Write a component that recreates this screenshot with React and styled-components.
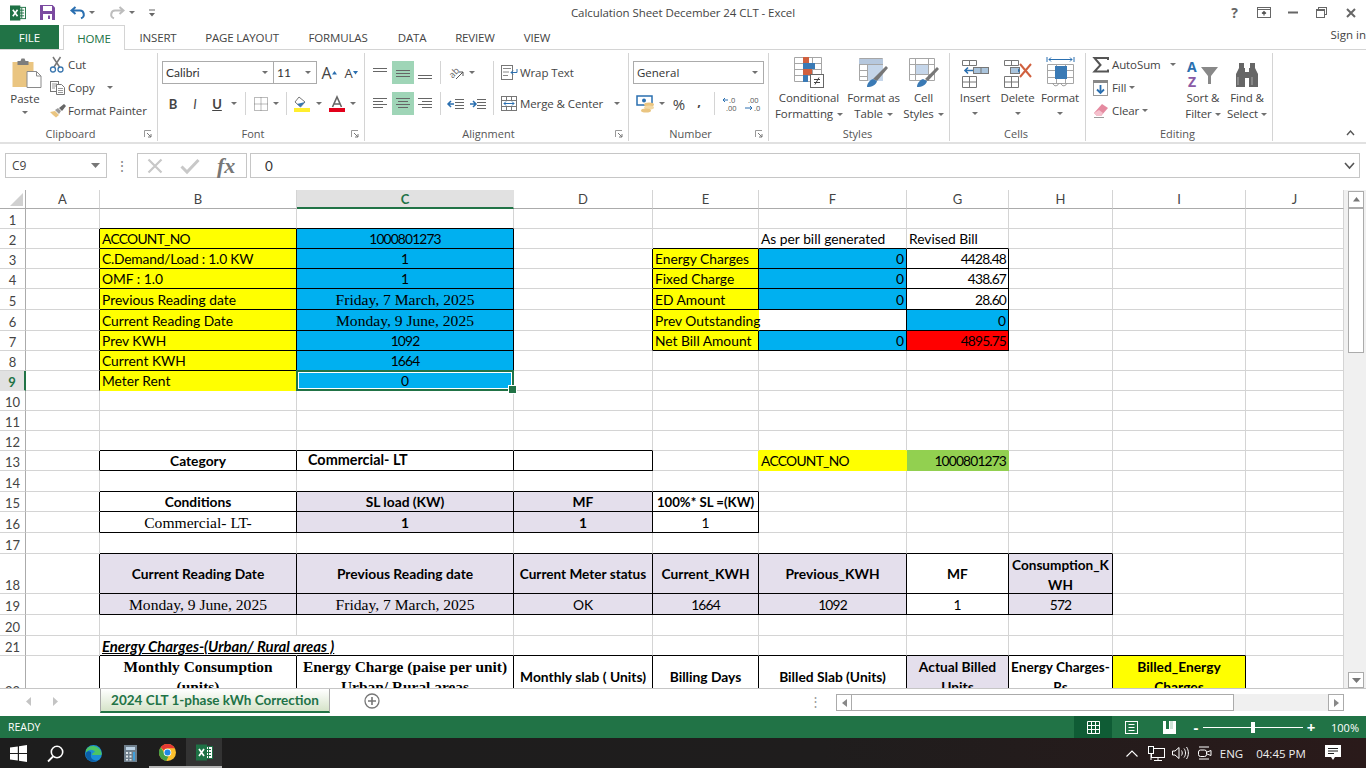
import React from 'react';
import styled, { createGlobalStyle } from 'styled-components';

const UI = '"Open Sans","Liberation Sans",sans-serif';
const CAL = 'Lato,"Liberation Sans",sans-serif';
const SER = '"Liberation Serif",serif';
const GREEN = '#217346';
const GRID = '#d4d4d4';

const Global = createGlobalStyle`
  html, body { margin: 0; padding: 0; overflow: hidden; background: #fff; }
  #root { width: 1366px; height: 768px; }
  * { box-sizing: border-box; }
`;
const App_ = styled.div`
  width: 1366px; height: 768px; display: flex; flex-direction: column;
  font-family: ${UI}; font-size: 11.5px; color: #444; background: #fff; overflow: hidden;
`;
const Ico = styled.svg`display: block; flex: none; overflow: visible;`;

/* title bar */
const TitleBar = styled.header`display: grid; grid-template-columns: 1fr auto 1fr; height: 25px; align-items: center;`;
const Row = styled.div`display: flex; align-items: center; justify-content: ${p => p.$end ? 'flex-end' : 'flex-start'};`;
const Title = styled.div`font-size: 11.5px; color: #444; letter-spacing: -0.07px;`;
const Slot = styled.span`
  display: flex; flex: none; align-items: center; justify-content: center;
  width: ${p => p.$w}px; height: 23px; padding-bottom: ${p => p.$pb || 0}px; background: ${p => p.$on ? '#9fd5b7' : 'transparent'};
  font-family: ${p => p.$cal ? CAL : UI};
  font-size: ${p => p.$fs || 12}px; font-weight: ${p => p.$b ? 700 : 400}; font-style: ${p => p.$i ? 'italic' : 'normal'};
  text-decoration: ${p => p.$u ? 'underline' : 'none'}; color: #444;
`;
const Caret = styled.i`
  display: inline-block; flex: none; width: 0; height: 0; border-left: 3px solid transparent; border-right: 3px solid transparent;
  border-top: 3px solid #707070; vertical-align: middle; margin-left: ${p => p.$ml ?? 0}px; margin-right: ${p => p.$mr ?? 0}px;
  margin-top: ${p => p.$mt ?? 0}px;
`;

/* tabs */
const TabBar = styled.nav`display: flex; height: 25px; align-items: stretch; border-bottom: 1px solid ${GRID};`;
const FileTab = styled.div`width: 59px; margin-right: 4px; background: ${GREEN}; color: #fff; display: flex; align-items: center; justify-content: center; font-size: 11.5px;`;
const Tab = styled.div`
  width: ${p => p.$w}px; display: flex; align-items: center; justify-content: center; font-size: 11.5px; letter-spacing: -0.15px;
  color: ${p => p.$on ? GREEN : '#444'}; background: #fff; height: ${p => p.$on ? 25 : 24}px;
  ${p => p.$on ? `border: 1px solid ${GRID}; border-bottom: 0;` : ''}
`;
const SignIn = styled.div`margin-left: auto; display: flex; align-items: center; font-size: 11.5px; color: #444; white-space: nowrap; padding-bottom: 5px;`;

/* ribbon */
const Ribbon = styled.section`display: flex; height: 94px; padding-top: 3px; border-bottom: 2px solid #e1e1e1;`;
const Group = styled.div`
  width: ${p => p.$w}px; flex: none; display: flex; flex-direction: column; height: 88px; border-right: 1px solid ${GRID};
`;
const GroupBody = styled.div`flex: 1; display: flex; padding-left: ${p => p.$pl || 0}px; min-height: 0;`;
const CollapseBox = styled.div`flex: 1; display: flex; justify-content: flex-end; align-items: flex-end; padding: 0 11px 6px 0;`;
const GroupFoot = styled.div`height: 14px; flex: none; display: flex; align-items: center; padding-right: 3px;`;
const GroupLabel = styled.div`flex: 1; text-align: center; font-size: 11px; color: #555; line-height: 14px;`;
const Launcher = styled.span`width: 13px; display: flex; justify-content: center;`;
const Stack = styled.div`display: flex; flex-direction: column; flex: none; width: ${p => p.$w ? p.$w + 'px' : 'auto'}; padding-top: ${p => p.$pt || 0}px; gap: ${p => p.$gap || 0}px;`;
const ToolRow = styled.div`display: flex; align-items: center; height: 23px; white-space: nowrap;`;
const ToolText = styled.span`font-size: 11.5px; color: #444; letter-spacing: -0.1px; margin-left: ${p => p.$ml ?? 4}px;`;
const Sep = styled.span`flex: none; width: 1px; height: 23px; background: ${GRID}; margin: 0 ${p => p.$m ?? 3}px;`;
const VSep = styled.span`flex: none; width: 1px; height: 54px; background: ${GRID}; margin: 8px ${p => p.$r ?? 7}px 0 ${p => p.$l ?? 3}px;`;
const PasteBtn = styled.div`width: 50px; flex: none; display: flex; flex-direction: column; align-items: center; padding-top: 5px; font-size: 11.5px; line-height: 16px;`;
const PasteLabel = styled.span`margin-top: 3px;`;
const Combo = styled.div`
  width: ${p => p.$w}px; height: 23px; flex: none; display: flex; align-items: center; justify-content: space-between;
  border: 1px solid #ababab; padding: 0 5px 0 3px; font-family: ${p => p.$ui ? UI : CAL}; font-size: ${p => p.$ui ? 11.5 : 12}px; color: #333;
  ${p => p.$joined ? 'margin-left: -1px;' : ''}
`;
const BigBtn = styled.div`
  width: ${p => p.$w}px; flex: none; display: flex; flex-direction: column; align-items: center; text-align: center;
  font-size: 11.5px; line-height: 16px; color: #444; letter-spacing: -0.1px; white-space: nowrap;
`;
const BigIcon = styled.div`height: 37px; display: flex; align-items: flex-end; padding-bottom: 2px;`;

/* formula */
const FormulaBar = styled.div`display: flex; align-items: stretch; height: 46px; padding: 9px 6px 12px 5px; flex: none;`;
const NameBox = styled.div`width: 102px; border: 1px solid #c6c6c6; display: flex; align-items: center; justify-content: space-between; padding: 0 6px; font-size: 12px; color: #444;`;
const Grip = styled.div`width: 30px; display: flex; align-items: center; justify-content: center; color: #888; font-size: 14px;`;
const FxBox = styled.div`width: 110px; border: 1px solid #c6c6c6; display: flex; align-items: center; padding-left: 9px; gap: 17px;`;
const FxGlyph = styled.span`font-family: ${SER}; font-style: italic; font-weight: 700; font-size: 22px; color: #777; line-height: 22px;`;
const FormulaInput = styled.div`flex: 1; margin-left: 3px; border: 1px solid #c6c6c6; display: flex; align-items: center; justify-content: space-between; padding: 0 4px 0 14px; font-family: ${CAL}; font-size: 13.5px; color: #333;`;

/* sheet */
const Sheet = styled.div`height: 498px; flex: none; display: flex; overflow: hidden;`;
const Table = styled.div`
  width: 1344px; height: 498px; overflow: hidden; display: grid; flex: none; align-content: start;
  grid-template-columns: 26px 74px 197px 217px 139px 106px 148px 102px 104px 133px 98px;
  grid-template-rows: 19px 20px 20px 20px 20px 21px 21px 20px 20px 20px 20px 20px 20px 20px 21px 20px 21px 21px 40px 21px 21px 20px 44px;
`;
const Corner = styled.div`background: #fff; border-right: 1px solid #ababab; border-bottom: 1px solid #ababab; display: flex; align-items: flex-end; justify-content: flex-end; padding: 0 2px 2px 0;`;
const ColHead = styled.div`
  display: flex; align-items: center; justify-content: center; font-family: ${CAL}; font-size: 13px;
  background: ${p => p.$on ? '#e1e1e1' : '#fff'}; color: ${p => p.$on ? GREEN : '#444'}; font-weight: ${p => p.$on ? 700 : 400};
  border-right: 1px solid ${p => p.$on ? '#e1e1e1' : GRID}; border-bottom: ${p => p.$on ? `2px solid ${GREEN}` : '1px solid #ababab'};
`;
const RowHead = styled.div`
  display: flex; align-items: flex-end; justify-content: center; font-family: ${CAL}; font-size: 13px;
  background: ${p => p.$on ? '#e1e1e1' : '#fff'}; color: ${p => p.$on ? GREEN : '#444'}; font-weight: ${p => p.$on ? 700 : 400};
  border-right: ${p => p.$on ? `2px solid ${GREEN}` : '1px solid #ababab'}; border-bottom: 1px solid ${p => p.$on ? '#e1e1e1' : GRID};
`;
const Cell = styled.div`
  position: relative; display: flex; min-width: 0; padding: ${p => p.$top && p.$wrap ? '1px' : '0'} 2px ${p => p.$pb || 0}px ${p => p.$pl ?? 2}px;
  line-height: ${p => p.$wrap ? '20px' : '18px'};
  background: ${p => p.$fill || 'transparent'}; color: #000;
  font-family: ${p => p.$serif ? SER : CAL}; font-size: ${p => p.$fs ? p.$fs : p.$serif ? 15.6 : 13.8}px;
  letter-spacing: ${p => p.$ls ?? 0}px;
  font-weight: ${p => p.$bold ? 700 : 400}; font-style: ${p => p.$ital ? 'italic' : 'normal'};
  text-decoration: ${p => p.$und ? 'underline' : 'none'};
  justify-content: ${p => p.$al === 'c' ? 'center' : p.$al === 'r' ? 'flex-end' : 'flex-start'};
  align-items: ${p => p.$top ? 'flex-start' : p.$mid ? 'center' : 'flex-end'};
  text-align: ${p => p.$al === 'c' ? 'center' : p.$al === 'r' ? 'right' : 'left'};
  white-space: ${p => p.$wrap ? 'pre-line' : 'nowrap'}; word-break: ${p => p.$brk ? 'break-all' : 'normal'};
  border-right: 1px solid ${p => p.$rc}; border-bottom: 1px solid ${p => p.$bc};
  ${p => p.$sel ? `
    &::before { content: ''; position: absolute; inset: -1px; border: 2px solid ${GREEN}; box-shadow: inset 0 0 0 1px #fff; z-index: 1; }
    &::after { content: ''; position: absolute; right: -4px; bottom: -4px; width: 7px; height: 7px; background: ${GREEN}; border: 1px solid #fff; z-index: 2; }` : ''}
`;
const VScroll = styled.div`flex: 1; display: flex; flex-direction: column; align-items: center; padding: 1px 2px 0 4px; background: #f0f0f0;`;
const ScrollBtn = styled.div`width: 16px; height: ${p => p.$h || 17}px; flex: none; background: #fff; border: 1px solid #ababab; display: flex; align-items: center; justify-content: center;`;
const VThumb = styled.div`width: 16px; height: 145px; flex: none; background: #fff; border: 1px solid #ababab;`;
const VFill = styled.div`flex: 1;`;

/* sheet tabs */
const SheetBar = styled.div`height: 28px; flex: none; display: flex; align-items: flex-start; border-top: 1px solid #c6c6c6; background: #fff;`;
const TabNav = styled.div`width: 100px; flex: none; height: 24px; display: flex; align-items: center; padding-left: 26px; gap: 22px;`;
const ActiveSheet = styled.div`
  width: 230px; height: 24px; flex: none; display: flex; align-items: center; justify-content: center;
  background: linear-gradient(#ffffff, #d5e3c8); border: 1px solid #ababab; border-top: 0; border-bottom: 2px solid ${GREEN};
  color: ${GREEN}; font-family: ${CAL}; font-weight: 700; font-size: 13.5px; white-space: nowrap;
`;
const AddSheet = styled.div`margin-left: 34px; height: 24px; display: flex; align-items: center;`;
const Dots = styled.div`margin-left: auto; height: 24px; display: flex; align-items: center; color: #999; font-size: 13px; padding-right: 14px;`;
const HScroll = styled.div`width: 508px; height: 17px; margin: 5px 22px 0 0; flex: none; display: flex; background: #f0f0f0;`;
const HThumb = styled.div`width: 382px; background: #fff; border: 1px solid #ababab; border-left: 0;`;
const HFill = styled.div`flex: 1;`;

/* status */
const Status = styled.footer`height: 22px; flex: none; background: ${GREEN}; display: flex; align-items: center; color: #fff; font-size: 10.5px; padding-left: 8px;`;
const StatusRight = styled.div`margin-left: auto; display: flex; align-items: center; height: 22px;`;
const ViewBtn = styled.div`width: ${p => p.$w}px; height: 22px; display: flex; align-items: center; justify-content: center; background: ${p => p.$on ? '#0f5c35' : 'transparent'};`;
const Slider = styled.div`width: 100px; height: 1px; background: #fff; margin-right: 1px; display: flex; align-items: center; justify-content: center;`;
const SliderThumb = styled.div`width: 4px; height: 11px; flex: none; background: #fff;`;
const ZoomSign = styled.span`font-size: 15px; font-weight: 700; width: 14px; text-align: center; line-height: 20px;`;
const ZoomPct = styled.span`width: 42px; margin-left: 6px; text-align: center; font-size: 11px;`;

/* taskbar */
const Taskbar = styled.div`height: 30px; flex: none; background: linear-gradient(90deg, #1d1d1d 0%, #1f1d1d 60%, #2a1a1a 100%); display: flex; align-items: center; color: #f0f0f0;`;
const TaskBtn = styled.div`
  width: ${p => p.$w || 37}px; height: 30px; flex: none; display: flex; align-items: center; justify-content: center;
  background: ${p => p.$on ? '#333' : 'transparent'}; border-bottom: ${p => p.$line ? '2px solid #b5b5b5' : '0'};
`;
const Tray = styled.div`margin-left: auto; display: flex; align-items: center; height: 30px; font-size: 11.5px; padding-right: 15px;`;
const TrayText = styled.span`width: ${p => p.$w}px; text-align: center; color: #eee; white-space: nowrap;`;
const HelpGlyph = styled.span`font-weight: 700; font-size: 14px; color: #666;`;

/* ---- icons ---- */
const Svg = ({ w, h, children }) => <Ico width={w} height={h} viewBox={`0 0 ${w} ${h}`} fill="none">{children}</Ico>;

const XlLogo = ({ s = 17 }) => (
  <Ico width={s} height={s} viewBox="0 0 17 17" fill="none">
    <rect x="8" y="2.5" width="8.5" height="12" fill="#fff" stroke="#1e7145" />
    <path d="M10 5.5h5M10 8.5h5M10 11.5h5M12.5 3v11" stroke="#1e7145" />
    <rect x="0" y="0.5" width="11" height="16" fill="#1e7145" />
    <path d="M3 5l5 7M8 5l-5 7" stroke="#fff" strokeWidth="1.7" />
  </Ico>
);
const SaveI = () => <Svg w={15} h={15}><path d="M0 0h12.5L15 2.5V15H0z" fill="#7b4aa0" /><rect x="3" y="1" width="9" height="5" fill="#fff" /><rect x="3" y="9" width="9" height="6" fill="#fff" /><rect x="8" y="10.5" width="2" height="3.5" fill="#7b4aa0" /></Svg>;
const UndoI = ({ c = '#2a6fb0' }) => <Svg w={15} h={13}><path d="M5.5 1L1.5 4.5l4 3.5M2 4.5h7.5a4 4 0 0 1 1.5 7.8" stroke={c} strokeWidth="2" /></Svg>;
const RedoI = () => <Svg w={15} h={13}><path d="M9.5 1l4 3.5-4 3.5M13 4.5H5.5A4 4 0 0 0 4 12.3" stroke="#bdbdbd" strokeWidth="2" /></Svg>;
const QatI = () => <Svg w={8} h={8}><path d="M1 1h6" stroke="#666" /><path d="M1 4h6L4 7.5z" fill="#666" /></Svg>;
const RibDispI = () => <Svg w={14} h={11}><rect x=".5" y=".5" width="13" height="10" stroke="#666" /><path d="M1 2.5h12" stroke="#666" /><path d="M7 8.5V4.5M5 6.5l2-2 2 2" stroke="#555" strokeWidth="1.2" /></Svg>;
const MinI = () => <Svg w={10} h={3}><rect y="0.5" width="10" height="2" fill="#666" /></Svg>;
const RestI = () => <Svg w={11} h={11}><rect x="2.5" y=".5" width="8" height="7" stroke="#666" /><rect x=".5" y="2.5" width="8" height="8" fill="#fff" stroke="#666" /><path d="M1 3.5h7" stroke="#666" /></Svg>;
const CloseI = () => <Svg w={10} h={10}><path d="M1 1l8 8M9 1l-8 8" stroke="#666" strokeWidth="2" /></Svg>;

const PasteI = () => (
  <Svg w={30} h={30}>
    <g transform="translate(2.5 0)">
      <rect x="0" y="4" width="21" height="25" fill="#eac581" />
      <path d="M5 3h3l1-2.5h3l1 2.5h3v4H5z" fill="#7d7d7d" />
      <path d="M14.5 13.5H24l4.5 4.5v11.5h-14z" fill="#fff" stroke="#8a8a8a" />
      <path d="M24 13.5V18h4.5" stroke="#8a8a8a" />
    </g>
  </Svg>
);
const CutI = () => <Svg w={14} h={16}><path d="M3 0l6.5 10M10.5 0L4 10" stroke="#777" strokeWidth="1.5" /><circle cx="3" cy="12.5" r="2.5" stroke="#3a76ae" strokeWidth="1.3" /><circle cx="10.5" cy="12.5" r="2.5" stroke="#3a76ae" strokeWidth="1.3" /></Svg>;
const CopyI = () => <Svg w={16} h={14}><rect x=".5" y=".5" width="8" height="10" fill="#fff" stroke="#777" /><path d="M2 3h5M2 5h4M2 7h3" stroke="#999" /><path d="M6.5 3.5h5l3 3v7h-8z" fill="#fff" stroke="#777" /><path d="M8 7.5h5M8 9.5h5M8 11.5h5" stroke="#999" /></Svg>;
const PainterI = () => <Svg w={17} h={15}><path d="M0 9l5-1 4 4-3 2.5C4 13 2 11 0 9z" fill="#eac581" /><path d="M5 7l3-2 3 3-2 3z" fill="#999" /><path d="M9 5l5-4 2 2-4 5z" fill="#666" /></Svg>;
const Launch = () => <Svg w={8} h={8}><path d="M.5 7V.5H7" stroke="#999" /><path d="M3 3l4 4M7 4v3H4" stroke="#777" /></Svg>;
const TinyUp = () => <Svg w={5} h={4}><path d="M0 3.5h5L2.5 0z" fill="#2a6fb0" /></Svg>;
const TinyDown = () => <Svg w={5} h={4}><path d="M0 0h5L2.5 3.5z" fill="#2a6fb0" /></Svg>;
const BordersI = () => <Svg w={14} h={14}><path d="M.5.5h13v13H.5zM7 .5v13M.5 7h13" stroke="#777" strokeDasharray="1 1" /></Svg>;
const FillI = () => <Svg w={16} h={16}><path d="M5 1l6 5-4.5 5L1 6z" fill="#fff" stroke="#777" /><path d="M3 8l8-2-4.5 5z" fill="#3a76ae" /><rect y="12" width="16" height="4" fill="#ffee2e" /></Svg>;
const FontColorI = () => <Svg w={16} h={16}><path d="M3.5 11L8 1l4.5 10M5 8h6" stroke="#666" strokeWidth="1.6" /><rect y="12" width="16" height="4" fill="#e2001a" /></Svg>;
const LinesI = ({ rows }) => <Svg w={15} h={14}>{rows.map(([a, b, y]) => <path key={y} d={`M${a} ${y}.5H${b}`} stroke="#666" />)}</Svg>;
const Orient = () => <Svg w={16} h={16}><text x="1" y="11" fontSize="9" fill="#666" fontFamily="Open Sans" transform="rotate(-45 6 8)">ab</text><path d="M8 14L15 7M15 11V7h-4" stroke="#555" /></Svg>;
const Outdent = () => <Svg w={16} h={11}><path d="M7 1.5h9M7 4.5h9M7 7.5h9M7 10.5h9" stroke="#666" /><path d="M0 6h6M3 3L0 6l3 3" stroke="#2a6fb0" strokeWidth="1.5" /></Svg>;
const Indent = () => <Svg w={16} h={11}><path d="M7 1.5h9M7 4.5h9M7 7.5h9M7 10.5h9" stroke="#666" /><path d="M0 6h6M3 3l3 3-3 3" stroke="#2a6fb0" strokeWidth="1.5" /></Svg>;
const WrapI = () => <Svg w={17} h={15}><rect x=".5" y=".5" width="11" height="14" fill="#fff" stroke="#777" /><path d="M2 3.5h8M2 7h6M2 10.5h5" stroke="#888" /><path d="M16 4v3.5H10M12 5.5l-2 2 2 2" stroke="#2a6fb0" /></Svg>;
const MergeI = () => <Svg w={16} h={15}><rect x=".5" y=".5" width="15" height="14" fill="#fff" stroke="#777" /><path d="M.5 4.5h15M.5 10.5h15M5.5.5v4M10.5.5v4M5.5 10.5v4M10.5 10.5v4" stroke="#777" /><path d="M3 7.5h10M5 5.5l-2 2 2 2M11 5.5l2 2-2 2" stroke="#2a6fb0" /></Svg>;
const MoneyI = () => <Svg w={20} h={18}><rect x="1" y="1" width="15" height="9" fill="#fff" stroke="#2a6fb0" strokeWidth="1.5" /><circle cx="8" cy="5.5" r="2" fill="#2a6fb0" /><ellipse cx="13" cy="9.5" rx="5" ry="2" fill="#eac581" /><ellipse cx="13" cy="12.5" rx="5" ry="2" fill="#f3d9a4" /><ellipse cx="10" cy="15.5" rx="5" ry="2" fill="#eac581" /></Svg>;
const IncDec = () => <Svg w={16} h={16}><text x="6" y="7" fontSize="7.5" fill="#555" fontFamily="Open Sans">.0</text><text x="3" y="15" fontSize="7.5" fill="#555" fontFamily="Open Sans">.00</text><path d="M5 4H0M2 2L0 4l2 2" stroke="#2a6fb0" /></Svg>;
const DecInc = () => <Svg w={16} h={16}><text x="3" y="7" fontSize="7.5" fill="#555" fontFamily="Open Sans">.00</text><text x="9" y="15" fontSize="7.5" fill="#555" fontFamily="Open Sans">.0</text><path d="M0 12h7M5 10l2 2-2 2" stroke="#2a6fb0" /></Svg>;
const CondI = () => <Svg w={30} h={31}><path d="M.5.5h27v24H.5zM9.5.5v24M18.5.5v24M.5 6.5h27M.5 12.5h27M.5 18.5h27" stroke="#a6a6a6" /><rect x="9" y="0" width="6" height="6" fill="#d0603e" /><rect x="9" y="6" width="12" height="6" fill="#3a7ab5" /><rect x="9" y="12" width="9" height="6" fill="#d0603e" /><rect x="9" y="18" width="5" height="7" fill="#3a7ab5" /><rect x="16.5" y="17.5" width="13" height="13" fill="#fff" stroke="#666" /><path d="M20 22.5h6M20 25.5h6M25 20.5l-4 7" stroke="#444" /></Svg>;
const TableI = () => <Svg w={30} h={30}><path d="M.5.5h23v22H.5zM8.5.5v22M16.5.5v22M.5 6.5h23M.5 12.5h23M.5 18.5h23" stroke="#a6a6a6" /><rect x="9" y="7" width="15" height="16" fill="#c5d6ea" /><rect x="0" y="1" width="24" height="5" fill="#b6c8de" /><path d="M14 21l13-13 2 2-11 13z" fill="#777" /><path d="M8 29c0-4 3-7 6-8l4 2c-1 4-5 6-10 6z" fill="#3a7ab5" /></Svg>;
const CellStyleI = () => <Svg w={30} h={30}><path d="M.5.5h25v22H.5zM6.5.5v22M19.5.5v22M.5 6.5h25M.5 16.5h25" stroke="#a6a6a6" /><rect x="7" y="7" width="12" height="9" fill="#c5d6ea" /><path d="M16 21l12-12 2 2-11 12z" fill="#777" /><path d="M8 29c0-4 3-7 6-8l4 2c-1 4-5 6-10 6z" fill="#3a7ab5" /></Svg>;
const InsertI = () => <Svg w={28} h={28}><path d="M1.5.5h14v5h-14zM8.5.5v5M1.5 16.5h14v11h-14zM8.5 16.5v11M1.5 22h14" stroke="#777" /><path d="M12 10.5H4M7 7.5l-3 3 3 3" stroke="#2a6fb0" strokeWidth="1.6" /><rect x="12.5" y="7.5" width="15" height="6" fill="#aac4dc" stroke="#777" /><path d="M20 7.5v6" stroke="#777" /></Svg>;
const DeleteI = () => <Svg w={30} h={28}><path d="M1.5.5h14v5h-14zM8.5.5v5M1.5 16.5h14v11h-14zM8.5 16.5v11M1.5 22h14" stroke="#777" /><rect x="7.5" y="7.5" width="9" height="6" fill="#aac4dc" stroke="#777" /><path d="M17 10.5l-2-2v4z" fill="#2a6fb0" /><path d="M17 4l11 13M28 4L17 17" stroke="#d0603e" strokeWidth="2" /></Svg>;
const FormatI = () => <Svg w={29} h={32}><path d="M1 1v5M28 1v5M3 3.5h23M3 3.5l2-2M3 3.5l2 2M26 3.5l-2-2M26 3.5l-2 2" stroke="#2a6fb0" /><path d="M1.5 8.5h26v19h-26zM10.5 8.5v19M19.5 8.5v19M1.5 14.5h26M1.5 21.5h26" stroke="#a6a6a6" /><rect x="9" y="10" width="12" height="13" fill="#3a7ab5" /><path d="M7 27.5c1 3 4 3 6 0M15 27.5c1 3 4 3 6 0" stroke="#888" /></Svg>;
const SigmaI = () => <Svg w={16} h={16}><path d="M15 3V1H1.5l6 7-6 6.5H15v-2" stroke="#555" strokeWidth="2" /></Svg>;
const FillDownI = () => <Svg w={15} h={16}><rect x=".5" y=".5" width="14" height="15" fill="#fff" stroke="#999" /><rect y="0" width="15" height="3" fill="#888" /><path d="M7.5 5v8M4 9.5l3.5 3.5L11 9.5" stroke="#2a6fb0" strokeWidth="1.8" /></Svg>;
const EraserI = () => <Svg w={16} h={15}><path d="M1 10l8-9 6 4-7 8H4z" fill="#e58aa0" /><path d="M1 10l3 3h4l2-3-4-3z" fill="#f5c0cd" /><path d="M1 14.5h10" stroke="#999" /></Svg>;
const SortI = () => <Svg w={32} h={28}><text x="0" y="12" fontSize="14" fontWeight="700" fill="#2a6fb0" fontFamily="Open Sans">A</text><text x="1" y="27" fontSize="14" fontWeight="700" fill="#8a5aa5" fontFamily="Open Sans">Z</text><path d="M14 7h17l-7 9v8h-3v-8z" fill="#888" /></Svg>;
const FindI = () => <Svg w={26} h={25}><path d="M5 0h5v5h1v4h4V5h1V0h5v5l3 6v13h-9v-9H11v9H2V11l3-6z" fill="#666" /><path d="M4 14v8M18 14v8" stroke="#aaa" /></Svg>;
const XI = () => <Svg w={16} h={16}><path d="M1.5 1.5l13 13M14.5 1.5l-13 13" stroke="#c8c8c8" strokeWidth="2.2" /></Svg>;
const CheckI = () => <Svg w={20} h={16}><path d="M1.5 8.5L7 14 18.5 2" stroke="#c8c8c8" strokeWidth="3" /></Svg>;
const UpArr = () => <Svg w={7} h={5}><path d="M0 4.5h7L3.5 0z" fill="#777" /></Svg>;
const DnArr = () => <Svg w={9} h={5}><path d="M0 0h9L4.5 5z" fill="#777" /></Svg>;
const SmChevron = ({ dir }) => <Svg w={5} h={9}><path d={dir === 'l' ? 'M5 0v9L0 4.5z' : 'M0 0v9l5-4.5z'} fill="#c4c4c4" /></Svg>;
const RArr = () => <Svg w={5} h={8}><path d="M0 0v8l5-4z" fill="#888" /></Svg>;
const LArr = () => <Svg w={5} h={8}><path d="M5 0v8L0 4z" fill="#888" /></Svg>;
const PlusI = () => <Svg w={16} h={16}><circle cx="8" cy="8" r="7" stroke="#777" strokeWidth="1.3" /><path d="M8 4v8M4 8h8" stroke="#777" strokeWidth="1.6" /></Svg>;
const CornerI = () => <Svg w={13} h={13}><path d="M13 0v13H0z" fill="#d0d0d0" /></Svg>;
const Collapse = () => <Svg w={9} h={6}><path d="M1 5l3.5-4L8 5" stroke="#555" strokeWidth="1.4" /></Svg>;
const FormulaCollapse = () => <Svg w={11} h={7}><path d="M1 1l4.5 5L10 1" stroke="#555" strokeWidth="1.6" /></Svg>;

const ViewGrid = () => <Svg w={13} h={13}><path d="M.5.5h12v12H.5zM4.5.5v12M8.5.5v12M.5 4.5h12M.5 8.5h12" stroke="#fff" /></Svg>;
const ViewPage = () => <Svg w={13} h={13}><rect x=".5" y=".5" width="12" height="12" stroke="#fff" /><path d="M3.5 3.5h6M3.5 6.5h6M3.5 9.5h6" stroke="#fff" /></Svg>;
const ViewBreak = () => <Svg w={13} h={13}><rect x="0" y="0" width="13" height="13" fill="#fff" /><rect x="3" y="0" width="3" height="8" fill={GREEN} /><rect x="7" y="0" width="3" height="8" fill="#cfe3d8" /></Svg>;

const WinI = () => <Svg w={17} h={17}><path d="M0 2.5L7.8 1.4v6.6H0zM9 1.2L17 0v8H9zM0 9h7.8v6.6L0 14.5zM9 9h8v8l-8-1.2z" fill="#fff" /></Svg>;
const SearchI = () => <Svg w={17} h={17}><circle cx="10" cy="7" r="5.7" stroke="#fff" strokeWidth="1.6" /><path d="M6 11.5L1 16.5" stroke="#fff" strokeWidth="1.8" /></Svg>;
const EdgeI = () => (
  <Svg w={17} h={17}>
    <circle cx="8.5" cy="8.5" r="8.5" fill="#1b8fd6" />
    <path d="M1 5c2-4 7-5 11-3 3 1.5 5 5 4.5 8H7c0-2 2-3 3-3C9 5 4 3 1 8z" fill="#4cc464" />
    <path d="M6 9c-1 4 2 7 7 6.5-2 1.5-6 2-9 0C2 14 0 11 1 8c1-2 3-2.5 5-1z" fill="#0c5fa8" />
  </Svg>
);
const CalcI = () => (
  <Svg w={13} h={17}>
    <rect width="13" height="17" fill="#6f7f8c" />
    <rect x="2" y="2" width="9" height="3" fill="#bcd3e6" />
    <path d="M2 7h2v2H2zM5.5 7h2v2h-2zM2 10.5h2v2H2zM5.5 10.5h2v2h-2zM2 14h2v1.5H2zM5.5 14h2v1.5h-2z" fill="#dfe6ea" />
    <rect x="9" y="7" width="2" height="8.5" fill="#3fa0dc" />
  </Svg>
);
const ChromeI = () => (
  <Svg w={17} h={17}>
    <circle cx="8.5" cy="8.5" r="8.5" fill="#fbc02d" />
    <path d="M8.5 0A8.5 8.5 0 0 1 15.9 4.3H8.5A4.2 4.2 0 0 0 4.8 6.5L1.8 3.2A8.5 8.5 0 0 1 8.5 0z" fill="#e53935" />
    <path d="M1.8 3.2l3.7 6.4a4.2 4.2 0 0 0 4 3l-2.4 4.3A8.5 8.5 0 0 1 1.8 3.2z" fill="#43a047" />
    <circle cx="8.5" cy="8.5" r="3.8" fill="#fff" /><circle cx="8.5" cy="8.5" r="3" fill="#1e88e5" />
  </Svg>
);
const TrayUp = () => <Svg w={12} h={7}><path d="M.5 6.5L6 1l5.5 5.5" stroke="#fff" strokeWidth="1.1" /></Svg>;
const NetI = () => <Svg w={17} h={15}><rect x="3.5" y="2.5" width="13" height="9" stroke="#fff" /><rect x=".5" y=".5" width="5" height="7" fill="#1d1d1d" stroke="#fff" /><path d="M10 11.5v3M6 14.5h8M3 8v6" stroke="#fff" /></Svg>;
const VolI = () => <Svg w={16} h={14}><path d="M.5 5H3L7 1.5v11L3 9H.5z" stroke="#fff" /><path d="M9.5 4.5c1 1.5 1 3.5 0 5M12 2.5c2 2.5 2 6.5 0 9M14.5 1c2.5 3.500 2.5 8.500 0 12" stroke="#fff" /></Svg>;
const MeetI = () => <Svg w={15} h={16}><path d="M2 2h10M2 14h10" stroke="#fff" /><rect x="1.5" y="5" width="8" height="6.5" rx="2" stroke="#fff" /><path d="M10 7l4-1.5v5L10 9" stroke="#fff" /></Svg>;
const NotifI = () => <Svg w={16} h={16}><path d="M0 0h16v12h-6l-2 3-2-3H0z" fill="#fff" /><path d="M3 3.5h10M3 6h10M3 8.5h6" stroke="#1d1d1d" /></Svg>;

/* ---- sheet data ---- */
const Y = '#ffff00', B = '#00b0f0', L = '#e4dfec', R = '#ff0000', G2 = '#92d050';
const cols = ['A', 'B', 'C', 'D', 'E', 'F', 'G', 'H', 'I', 'J'];
const rowsN = Array.from({ length: 22 }, (_, i) => i + 1);
const yb = { fill: Y, box: true };
const bb = { fill: B, box: true, al: 'c' };
const br = { fill: B, box: true, al: 'r' };
const wb = { box: true, al: 'r' };
const hd = { box: true, al: 'c', bold: true };
const lv = { box: true, al: 'c', fill: L };
const DATA = {
  B2: { t: 'ACCOUNT_NO', ...yb, ls: -0.7 }, C2: { t: '1000801273', ...bb },
  B3: { t: 'C.Demand/Load : 1.0 KW', ...yb, ls: -0.2 }, C3: { t: '1', ...bb },
  B4: { t: 'OMF : 1.0', ...yb }, C4: { t: '1', ...bb },
  B5: { t: 'Previous Reading date', ...yb }, C5: { t: 'Friday, 7 March, 2025', ...bb, serif: true },
  B6: { t: 'Current Reading Date', ...yb }, C6: { t: 'Monday, 9 June, 2025', ...bb, serif: true },
  B7: { t: 'Prev KWH', ...yb }, C7: { t: '1092', ...bb },
  B8: { t: 'Current KWH', ...yb }, C8: { t: '1664', ...bb },
  B9: { t: 'Meter Rent', ...yb, noBottom: true }, C9: { t: '0', fill: B, al: 'c', sel: true },
  F2: { t: 'As per bill generated' }, G2: { t: 'Revised Bill' },
  E3: { t: 'Energy Charges', ...yb }, F3: { t: '0', ...br }, G3: { t: '4428.48', ...wb },
  E4: { t: 'Fixed Charge', ...yb }, F4: { t: '0', ...br }, G4: { t: '438.67', ...wb },
  E5: { t: 'ED Amount', ...yb }, F5: { t: '0', ...br }, G5: { t: '28.60', ...wb },
  E6: { t: 'Prev Outstanding', ...yb, noRight: true }, F6: { box: true, noLeft: true }, G6: { t: '0', ...br },
  E7: { t: 'Net Bill Amount', ...yb }, F7: { t: '0', ...br }, G7: { t: '4895.75', fill: R, box: true, al: 'r' },
  B13: { t: 'Category', ...hd }, C13: { t: 'Commercial- LT', box: true, bold: true, top: true, pl: 11, fs: 14.4 }, D13: { box: true },
  F13: { t: 'ACCOUNT_NO', fill: Y, ls: -0.7 }, G13: { t: '1000801273', fill: G2, al: 'r' },
  B15: { t: 'Conditions', ...hd }, C15: { t: 'SL load (KW)', ...lv, bold: true }, D15: { t: 'MF', ...lv, bold: true }, E15: { t: '100%* SL =(KW)', ...hd, fs: 13.2 },
  B16: { t: 'Commercial- LT-', box: true, al: 'c', serif: true }, C16: { t: '1', ...lv, bold: true }, D16: { t: '1', ...lv, bold: true }, E16: { t: '1', box: true, al: 'c' },
  B18: { t: 'Current Reading Date', ...lv, bold: true, mid: true }, C18: { t: 'Previous Reading date', ...lv, bold: true, mid: true },
  D18: { t: 'Current Meter status', ...lv, bold: true, mid: true, fs: 13.6 }, E18: { t: 'Current_KWH', ...lv, bold: true, mid: true },
  F18: { t: 'Previous_KWH', ...lv, bold: true, mid: true }, G18: { t: 'MF', box: true, al: 'c', bold: true, mid: true },
  H18: { t: 'Consumption_KWH', ...lv, bold: true, wrap: true, brk: true, top: true, fs: 13.6 },
  B19: { t: 'Monday, 9 June, 2025', ...lv, serif: true }, C19: { t: 'Friday, 7 March, 2025', ...lv, serif: true },
  D19: { t: 'OK', ...lv }, E19: { t: '1664', ...lv }, F19: { t: '1092', ...lv }, G19: { t: '1', box: true, al: 'c' }, H19: { t: '572', ...lv },
  B21: { t: 'Energy Charges-(Urban/ Rural areas )', bold: true, ital: true, und: true, noRight: true, fs: 14.9 },
  B22: { t: 'Monthly Consumption\n(units)', box: true, al: 'c', bold: true, serif: true, wrap: true, top: true, fs: 15.4 },
  C22: { t: 'Energy Charge (paise per unit)\nUrban/ Rural areas', box: true, al: 'c', bold: true, serif: true, wrap: true, top: true, fs: 15.4 },
  D22: { t: 'Monthly slab ( Units)', box: true, al: 'c', bold: true, mid: true, pb: 2 },
  E22: { t: 'Billing Days', box: true, al: 'c', bold: true, mid: true, pb: 2 },
  F22: { t: 'Billed Slab (Units)', box: true, al: 'c', bold: true, mid: true, pb: 2 },
  G22: { t: 'Actual Billed Units', ...lv, bold: true, wrap: true, top: true },
  H22: { t: 'Energy Charges-Rs', box: true, al: 'c', bold: true, wrap: true, top: true, fs: 13.6 },
  I22: { t: 'Billed_Energy Charges', fill: Y, box: true, al: 'c', bold: true, wrap: true, top: true },
};
const get = (c, r) => DATA[`${c}${r}`] || {};
const nextCol = c => cols[cols.indexOf(c) + 1];
const isNum = t => /^[\d.]{2,}$/.test(t || '');

function SheetCell({ c, r }) {
  const d = get(c, r);
  const right = nextCol(c) ? get(nextCol(c), r) : {};
  const below = get(c, r + 1);
  const rBlack = (d.box && !d.noRight) || (right.box && !right.noLeft);
  const bBlack = (d.box && !d.noBottom) || below.box;
  const rc = rBlack ? '#000' : d.noRight ? 'transparent' : d.fill || right.fill || GRID;
  const bc = bBlack ? '#000' : d.fill || below.fill || GRID;
  return (
    <Cell $fill={d.fill} $rc={rc} $bc={bc} $al={d.al} $bold={d.bold} $serif={d.serif} $top={d.top} $mid={d.mid}
      $wrap={d.wrap} $brk={d.brk} $ital={d.ital} $und={d.und} $sel={d.sel} $pl={d.pl} $pb={d.pb} $fs={d.fs}
      $ls={d.ls ?? (isNum(d.t) ? -0.85 : 0)}>
      {d.t ? <span>{d.t}</span> : null}
    </Cell>
  );
}

const tabs = [['HOME', 62, true], ['INSERT', 66], ['PAGE LAYOUT', 102], ['FORMULAS', 90], ['DATA', 58], ['REVIEW', 68], ['VIEW', 56]];
const foot = (label, launch) => (
  <GroupFoot>
    <GroupLabel>{label}</GroupLabel>
    {launch ? <Launcher><Launch /></Launcher> : null}
  </GroupFoot>
);

export default function App() {
  return (
    <App_>
      <Global />
      <TitleBar>
        <Row>
          <Slot $w={10} />
          <XlLogo s={16} />
          <Slot $w={14} />
          <SaveI />
          <Slot $w={15} />
          <UndoI />
          <Caret $ml={4} />
          <Slot $w={15} />
          <RedoI />
          <Caret $ml={4} />
          <Slot $w={13} />
          <QatI />
        </Row>
        <Title>Calculation Sheet December 24 CLT - Excel</Title>
        <Row $end>
          <Slot $w={29}><HelpGlyph>?</HelpGlyph></Slot>
          <Slot $w={29}><RibDispI /></Slot>
          <Slot $w={29}><MinI /></Slot>
          <Slot $w={29}><RestI /></Slot>
          <Slot $w={29}><CloseI /></Slot>
          <Slot $w={1} />
        </Row>
      </TitleBar>

      <TabBar>
        <FileTab>FILE</FileTab>
        {tabs.map(([t, w, on]) => <Tab key={t} $w={w} $on={on}>{t}</Tab>)}
        <SignIn>Sign in</SignIn>
      </TabBar>

      <Ribbon>
        <Group $w={158}>
          <GroupBody>
            <PasteBtn>
              <PasteI />
              <PasteLabel>Paste</PasteLabel>
              <Caret $mt={4} />
            </PasteBtn>
            <Stack>
              <ToolRow><CutI /><ToolText>Cut</ToolText></ToolRow>
              <ToolRow><CopyI /><ToolText $ml={2}>Copy</ToolText><Caret $ml={12} /></ToolRow>
              <ToolRow><PainterI /><ToolText $ml={1}>Format Painter</ToolText></ToolRow>
            </Stack>
          </GroupBody>
          {foot('Clipboard', true)}
        </Group>

        <Group $w={207}>
          <GroupBody $pl={4}>
            <Stack $pt={8} $gap={8}>
              <ToolRow>
                <Combo $w={112}>Calibri<Caret /></Combo>
                <Combo $w={44} $joined>11<Caret /></Combo>
                <Slot $w={24} $fs={16}>A<TinyUp /></Slot>
                <Slot $w={20} $fs={13}>A<TinyDown /></Slot>
              </ToolRow>
              <ToolRow>
                <Slot $w={22} $b $cal $fs={13}>B</Slot>
                <Slot $w={22} $i $cal $fs={13}>I</Slot>
                <Slot $w={22} $u $b $cal $fs={13}>U</Slot>
                <Slot $w={12}><Caret /></Slot>
                <Sep $m={5} />
                <Slot $w={19}><BordersI /></Slot>
                <Slot $w={11}><Caret /></Slot>
                <Sep $m={5} />
                <Slot $w={20}><FillI /></Slot>
                <Slot $w={14}><Caret /></Slot>
                <Slot $w={21}><FontColorI /></Slot>
                <Slot $w={12}><Caret /></Slot>
              </ToolRow>
            </Stack>
          </GroupBody>
          {foot('Font', true)}
        </Group>

        <Group $w={264}>
          <GroupBody $pl={4}>
            <Stack $pt={8} $gap={8}>
              <ToolRow>
                <Slot $w={23}><LinesI rows={[[0, 14, 2], [0, 14, 5]]} /></Slot>
                <Slot $w={22} $on><LinesI rows={[[0, 14, 4], [0, 14, 7], [0, 14, 10]]} /></Slot>
                <Slot $w={23}><LinesI rows={[[0, 14, 9], [0, 14, 12]]} /></Slot>
                <Sep />
                <Slot $w={4} />
                <Orient />
                <Caret $ml={5} />
              </ToolRow>
              <ToolRow>
                <Slot $w={23}><LinesI rows={[[0, 14, 1], [0, 10, 4], [0, 14, 7], [0, 10, 10]]} /></Slot>
                <Slot $w={22} $on><LinesI rows={[[0, 14, 1], [2, 12, 4], [0, 14, 7], [2, 12, 10]]} /></Slot>
                <Slot $w={23}><LinesI rows={[[0, 14, 1], [4, 14, 4], [0, 14, 7], [4, 14, 10]]} /></Slot>
                <Sep />
                <Slot $w={4} />
                <Outdent />
                <Slot $w={6} />
                <Indent />
              </ToolRow>
            </Stack>
            <VSep $l={7} $r={7} />
            <Stack $pt={8} $gap={8}>
              <ToolRow><WrapI /><ToolText $ml={2}>Wrap Text</ToolText></ToolRow>
              <ToolRow><MergeI /><ToolText $ml={3}>Merge &amp; Center</ToolText><Caret $ml={11} /></ToolRow>
            </Stack>
          </GroupBody>
          {foot('Alignment', true)}
        </Group>

        <Group $w={140}>
          <GroupBody $pl={4}>
            <Stack $pt={8} $gap={8}>
              <ToolRow><Combo $w={131} $ui>General<Caret /></Combo></ToolRow>
              <ToolRow>
                <Slot $w={25}><MoneyI /></Slot>
                <Slot $w={8}><Caret /></Slot>
                <Slot $w={26} $fs={15}>%</Slot>
                <Slot $w={14} $b $fs={13} $pb={6}>,</Slot>
                <Sep $m={8} />
                <Slot $w={16}><IncDec /></Slot>
                <Slot $w={6} />
                <Slot $w={16}><DecInc /></Slot>
              </ToolRow>
            </Stack>
          </GroupBody>
          {foot('Number', true)}
        </Group>

        <Group $w={181}>
          <GroupBody>
            <BigBtn $w={80}><BigIcon><CondI /></BigIcon>Conditional<span>Formatting<Caret $ml={4} /></span></BigBtn>
            <BigBtn $w={49}><BigIcon><TableI /></BigIcon>Format as<span>Table<Caret $ml={4} /></span></BigBtn>
            <BigBtn $w={51}><BigIcon><CellStyleI /></BigIcon>Cell<span>Styles<Caret $ml={4} /></span></BigBtn>
          </GroupBody>
          {foot('Styles')}
        </Group>

        <Group $w={136}>
          <GroupBody $pl={3}>
            <BigBtn $w={44}><BigIcon><InsertI /></BigIcon>Insert<Caret $mt={6} /></BigBtn>
            <BigBtn $w={41}><BigIcon><DeleteI /></BigIcon>Delete<Caret $mt={6} /></BigBtn>
            <BigBtn $w={44}><BigIcon><FormatI /></BigIcon>Format<Caret $mt={6} /></BigBtn>
          </GroupBody>
          {foot('Cells')}
        </Group>

        <Group $w={187}>
          <GroupBody $pl={7}>
            <Stack $w={88}>
              <ToolRow><SigmaI /><ToolText $ml={3}>AutoSum</ToolText><Caret $ml={9} /></ToolRow>
              <ToolRow><FillDownI /><ToolText $ml={4}>Fill</ToolText><Caret $ml={3} /></ToolRow>
              <ToolRow><EraserI /><ToolText $ml={3}>Clear</ToolText><Caret $ml={3} /></ToolRow>
            </Stack>
            <BigBtn $w={44}><BigIcon><SortI /></BigIcon>Sort &amp;<span>Filter<Caret $ml={3} /></span></BigBtn>
            <BigBtn $w={44}><BigIcon><FindI /></BigIcon>Find &amp;<span>Select<Caret $ml={3} /></span></BigBtn>
          </GroupBody>
          {foot('Editing')}
        </Group>

        <CollapseBox><Collapse /></CollapseBox>
      </Ribbon>

      <FormulaBar>
        <NameBox>C9<DnArr /></NameBox>
        <Grip>⋮</Grip>
        <FxBox><XI /><CheckI /><FxGlyph>fx</FxGlyph></FxBox>
        <FormulaInput>0<FormulaCollapse /></FormulaInput>
      </FormulaBar>

      <Sheet>
        <Table>
          <Corner><CornerI /></Corner>
          {cols.map(c => <ColHead key={c} $on={c === 'C'}>{c}</ColHead>)}
          {rowsN.map(r => (
            <React.Fragment key={r}>
              <RowHead $on={r === 9}>{r}</RowHead>
              {cols.map(c => <SheetCell key={c} c={c} r={r} />)}
            </React.Fragment>
          ))}
        </Table>
        <VScroll>
          <ScrollBtn><UpArr /></ScrollBtn>
          <VThumb />
          <VFill />
          <ScrollBtn $h={16}><DnArr /></ScrollBtn>
        </VScroll>
      </Sheet>

      <SheetBar>
        <TabNav><SmChevron dir="l" /><SmChevron dir="r" /></TabNav>
        <ActiveSheet>2024 CLT 1-phase kWh Correction</ActiveSheet>
        <AddSheet><PlusI /></AddSheet>
        <Dots>⋮</Dots>
        <HScroll>
          <ScrollBtn $h={17}><LArr /></ScrollBtn>
          <HThumb />
          <HFill />
          <ScrollBtn $h={17}><RArr /></ScrollBtn>
        </HScroll>
      </SheetBar>

      <Status>
        READY
        <StatusRight>
          <ViewBtn $w={38} $on><ViewGrid /></ViewBtn>
          <ViewBtn $w={38}><ViewPage /></ViewBtn>
          <ViewBtn $w={38}><ViewBreak /></ViewBtn>
          <ViewBtn $w={1} />
          <ZoomSign>-</ZoomSign>
          <Slider><SliderThumb /></Slider>
          <ZoomSign>+</ZoomSign>
          <ZoomPct>100%</ZoomPct>
        </StatusRight>
      </Status>

      <Taskbar>
        <TaskBtn $w={37}><WinI /></TaskBtn>
        <TaskBtn $w={37}><SearchI /></TaskBtn>
        <TaskBtn $w={38}><EdgeI /></TaskBtn>
        <TaskBtn $w={37}><CalcI /></TaskBtn>
        <TaskBtn $w={37} $line><ChromeI /></TaskBtn>
        <TaskBtn $w={36} $on $line><XlLogo /></TaskBtn>
        <Tray>
          <TaskBtn $w={24}><TrayUp /></TaskBtn>
          <TaskBtn $w={24}><NetI /></TaskBtn>
          <TaskBtn $w={24}><VolI /></TaskBtn>
          <TaskBtn $w={24}><MeetI /></TaskBtn>
          <TrayText $w={31}>ENG</TrayText>
          <TrayText $w={68}>04:45 PM</TrayText>
          <TaskBtn $w={36}><NotifI /></TaskBtn>
        </Tray>
      </Taskbar>
    </App_>
  );
}
